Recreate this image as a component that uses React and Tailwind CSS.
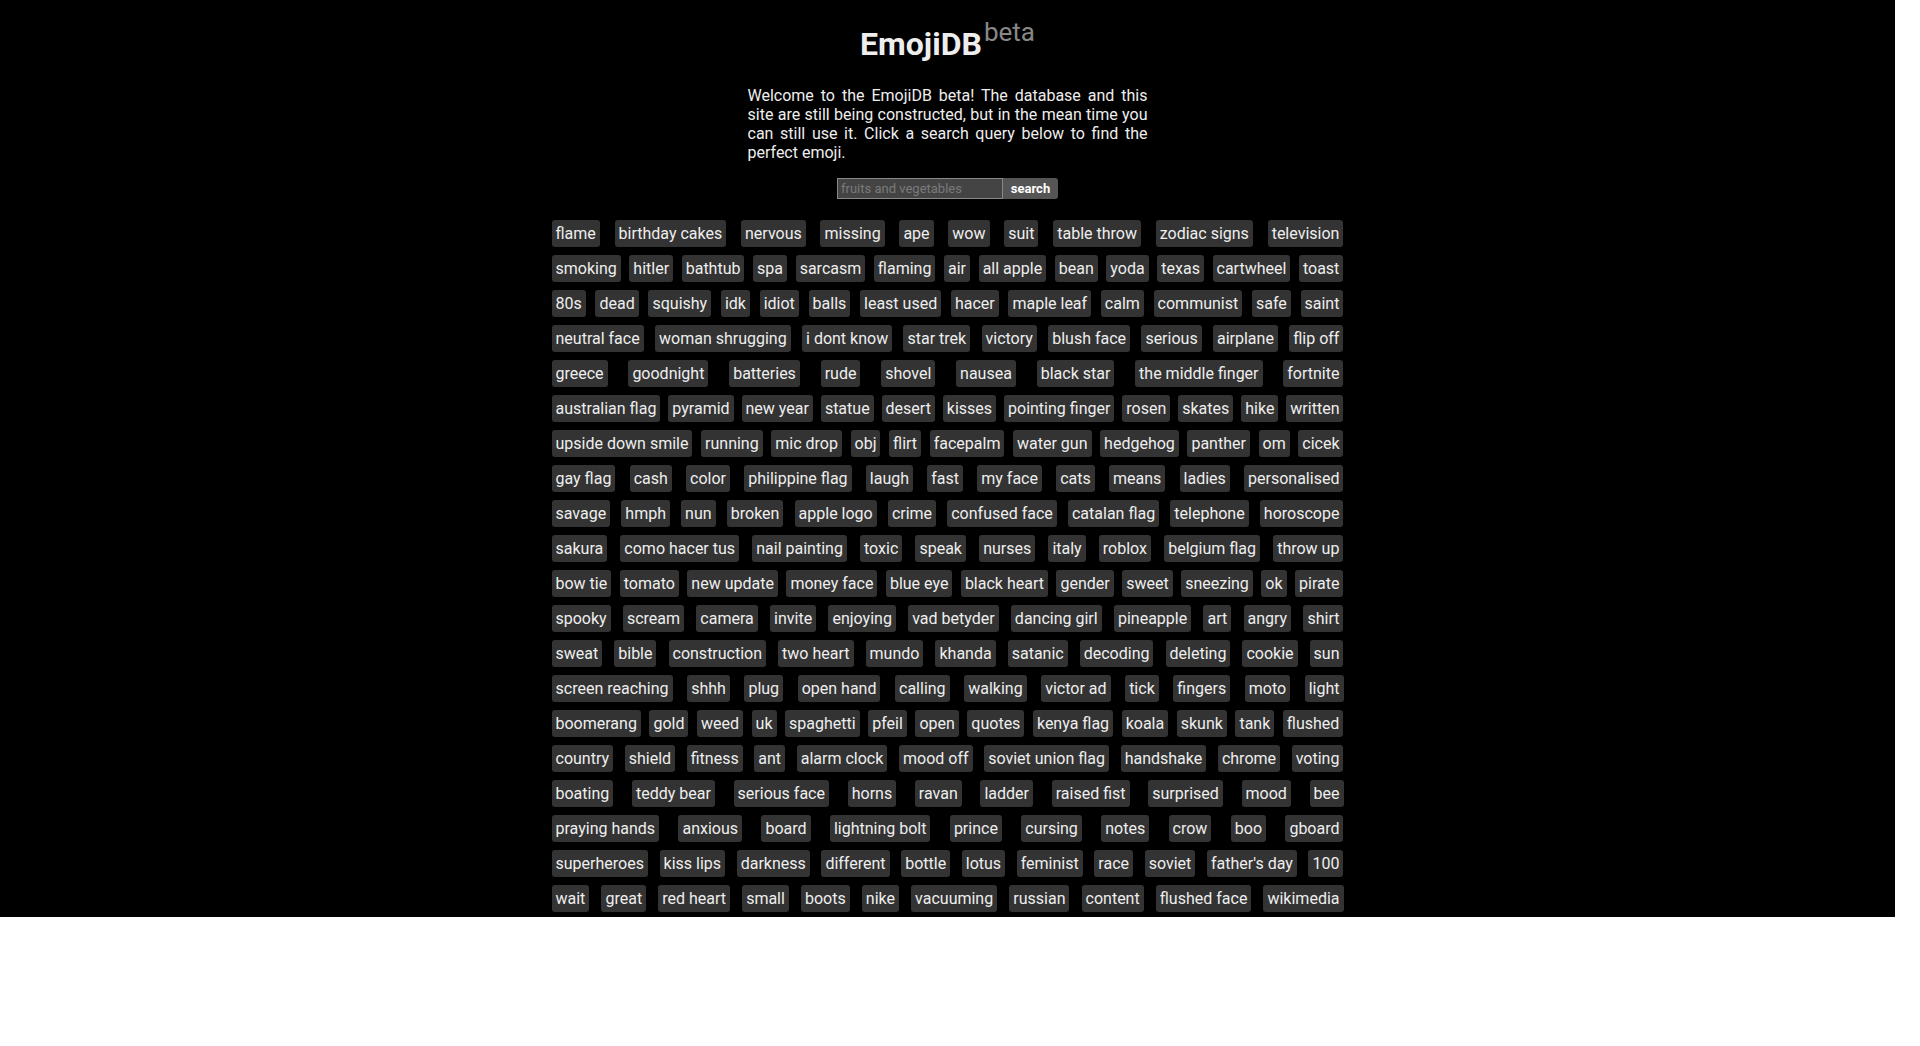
import React from 'react';

const rows = [
  ['flame', 'birthday cakes', 'nervous', 'missing', 'ape', 'wow', 'suit', 'table throw', 'zodiac signs', 'television'],
  ['smoking', 'hitler', 'bathtub', 'spa', 'sarcasm', 'flaming', 'air', 'all apple', 'bean', 'yoda', 'texas', 'cartwheel', 'toast'],
  ['80s', 'dead', 'squishy', 'idk', 'idiot', 'balls', 'least used', 'hacer', 'maple leaf', 'calm', 'communist', 'safe', 'saint'],
  ['neutral face', 'woman shrugging', 'i dont know', 'star trek', 'victory', 'blush face', 'serious', 'airplane', 'flip off'],
  ['greece', 'goodnight', 'batteries', 'rude', 'shovel', 'nausea', 'black star', 'the middle finger', 'fortnite'],
  ['australian flag', 'pyramid', 'new year', 'statue', 'desert', 'kisses', 'pointing finger', 'rosen', 'skates', 'hike', 'written'],
  ['upside down smile', 'running', 'mic drop', 'obj', 'flirt', 'facepalm', 'water gun', 'hedgehog', 'panther', 'om', 'cicek'],
  ['gay flag', 'cash', 'color', 'philippine flag', 'laugh', 'fast', 'my face', 'cats', 'means', 'ladies', 'personalised'],
  ['savage', 'hmph', 'nun', 'broken', 'apple logo', 'crime', 'confused face', 'catalan flag', 'telephone', 'horoscope'],
  ['sakura', 'como hacer tus', 'nail painting', 'toxic', 'speak', 'nurses', 'italy', 'roblox', 'belgium flag', 'throw up'],
  ['bow tie', 'tomato', 'new update', 'money face', 'blue eye', 'black heart', 'gender', 'sweet', 'sneezing', 'ok', 'pirate'],
  ['spooky', 'scream', 'camera', 'invite', 'enjoying', 'vad betyder', 'dancing girl', 'pineapple', 'art', 'angry', 'shirt'],
  ['sweat', 'bible', 'construction', 'two heart', 'mundo', 'khanda', 'satanic', 'decoding', 'deleting', 'cookie', 'sun'],
  ['screen reaching', 'shhh', 'plug', 'open hand', 'calling', 'walking', 'victor ad', 'tick', 'fingers', 'moto', 'light'],
  ['boomerang', 'gold', 'weed', 'uk', 'spaghetti', 'pfeil', 'open', 'quotes', 'kenya flag', 'koala', 'skunk', 'tank', 'flushed'],
  ['country', 'shield', 'fitness', 'ant', 'alarm clock', 'mood off', 'soviet union flag', 'handshake', 'chrome', 'voting'],
  ['boating', 'teddy bear', 'serious face', 'horns', 'ravan', 'ladder', 'raised fist', 'surprised', 'mood', 'bee'],
  ['praying hands', 'anxious', 'board', 'lightning bolt', 'prince', 'cursing', 'notes', 'crow', 'boo', 'gboard'],
  ['superheroes', 'kiss lips', 'darkness', 'different', 'bottle', 'lotus', 'feminist', 'race', 'soviet', "father's day", '100'],
  ['wait', 'great', 'red heart', 'small', 'boots', 'nike', 'vacuuming', 'russian', 'content', 'flushed face', 'wikimedia'],
];

const Tag = ({ label }) => (
  <button className="h-[27px] px-[4px] rounded-[3px] bg-[#333333] text-[16px] leading-[27px] text-[#eeeeee] whitespace-nowrap cursor-pointer">
    {label}
  </button>
);

export default function App() {
  return (
    <div className="w-[1895px] bg-black pt-[19px] pb-[5px] font-['Roboto','Liberation_Sans',sans-serif]">
      {/* Header */}
      <h1 className="text-center text-[32px] font-bold leading-[38px] text-[#eeeeee]">
        EmojiDB
        <span className="ml-[2px] align-[14px] text-[26px] font-normal leading-none text-[#888888]">beta</span>
      </h1>

      {/* Intro */}
      <p className="mx-auto mt-[23px] w-[400px] text-justify text-[16px] leading-[19px] text-[#eeeeee]">
        Welcome to the EmojiDB beta! The database and this site are still being constructed, but in the mean time you can still use it. Click a search query below to find the perfect emoji.
      </p>

      {/* Search */}
      <div className="mt-[16px] flex justify-center">
        <input
          type="text"
          placeholder="fruits and vegetables"
          className="w-[166px] h-[21px] border border-[#888888] bg-[#444444] px-[3px] text-[13px] text-[#eeeeee] placeholder:text-[#7a7a7a] outline-none"
        />
        <button className="w-[55px] h-[21px] rounded-r-[3px] bg-[#555555] text-[13px] font-bold text-white">
          search
        </button>
      </div>

      {/* Tags */}
      <div className="mx-auto mt-[21px] flex w-[792px] flex-col gap-[8px]">
        {rows.map((row, i) => (
          <div key={i} className="flex justify-between">
            {row.map((t) => (
              <Tag key={t} label={t} />
            ))}
          </div>
        ))}
      </div>
    </div>
  );
}
